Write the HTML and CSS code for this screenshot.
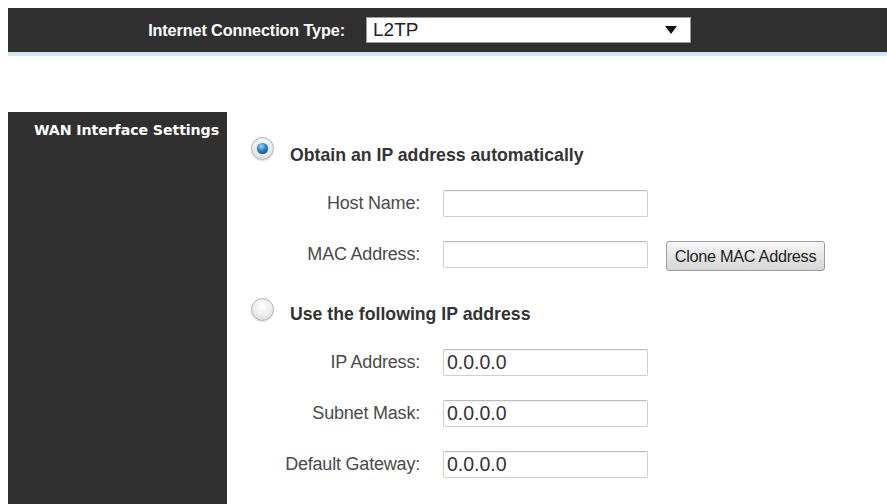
FILE: index.html
```html
<!DOCTYPE html>
<html>
<head>
<meta charset="utf-8">
<title>WAN Settings</title>
<link rel="stylesheet" href="styles.css">
</head>
<body>
<div class="topbar">
  <div class="type-label">Internet Connection Type:</div>
  <div class="select">
    <span class="select-value">L2TP</span>
    <svg class="select-arrow" width="12" height="8" viewBox="0 0 12 8"><path d="M0 0 L12 0 L6 8 Z" fill="#111"/></svg>
  </div>
</div>

<div class="main">
  <div class="sidebar">WAN Interface Settings</div>
  <div class="content">
    <div class="heading-row first">
      <span class="radio checked"><span class="dot"></span></span>
      <span class="heading">Obtain an IP address automatically</span>
    </div>
    <div class="field-row host">
      <label class="label">Host Name:</label>
      <div class="input"></div>
    </div>
    <div class="field-row">
      <label class="label">MAC Address:</label>
      <div class="input"></div>
      <div class="button">Clone MAC Address</div>
    </div>
    <div class="heading-row second">
      <span class="radio"></span>
      <span class="heading">Use the following IP address</span>
    </div>
    <div class="field-row ip">
      <label class="label">IP Address:</label>
      <div class="input">0.0.0.0</div>
    </div>
    <div class="field-row">
      <label class="label">Subnet Mask:</label>
      <div class="input">0.0.0.0</div>
    </div>
    <div class="field-row">
      <label class="label">Default Gateway:</label>
      <div class="input">0.0.0.0</div>
    </div>
  </div>
</div>
</body>
</html>
```

FILE: styles.css
```css
html, body {
  margin: 0;
  padding: 0;
  background: #ffffff;
  overflow: hidden;
}
body {
  font-family: "Liberation Sans", Arial, sans-serif;
  padding: 8px 0 0 8px;
}

.topbar {
  height: 44px;
  background: #303030;
  border-bottom: 4px solid #7fb2c8;
  border-image: linear-gradient(to bottom, #3f6f88, #6ea6bf, #cfe8f1) 1;
  display: flex;
  align-items: center;
}
.type-label {
  width: 337px;
  text-align: right;
  padding-right: 5px;
  color: #ffffff;
  font-weight: bold;
  font-size: 16.2px;
  letter-spacing: -0.1px;
}
.select {
  margin-left: 16px;
  background: #ffffff;
  border: 1px solid #9a9a9a;
  display: flex;
  align-items: center;
  justify-content: space-between;
  padding-left: 6px;
  padding-right: 13px;
  box-sizing: border-box;
  width: 325px;
  height: 26px;
}
.select-value {
  font-size: 19px;
  color: #222;
}
.select-arrow {
  display: block;
}

.main {
  margin-top: 56px;
  display: flex;
}
.sidebar {
  width: 219px;
  height: 392px;
  background: #303030;
  color: #ffffff;
  font-family: "DejaVu Sans", Verdana, sans-serif;
  font-weight: bold;
  font-size: 14.2px;
  line-height: 16px;
  text-align: right;
  padding: 10px 8px 0 0;
  box-sizing: border-box;
  letter-spacing: -0.1px;
}
.content {
  display: flex;
  flex-direction: column;
}

.heading-row {
  display: flex;
  align-items: flex-start;
  height: 29px;
  padding-left: 24px;
}
.heading-row.first {
  margin-top: 25px;
}
.heading-row.second {
  margin-top: 29px;
}
.heading {
  margin-left: 16px;
  font-weight: bold;
  font-size: 17.7px;
  color: #333333;
  line-height: 22px;
  margin-top: 7px;
}
.heading-row.second .heading {
  margin-top: 5px;
}

.radio {
  width: 23px;
  height: 23px;
  border-radius: 50%;
  box-sizing: border-box;
  border: 1px solid #b4b4b4;
  background: radial-gradient(circle at 50% 35%, #ffffff 0%, #ececec 55%, #cfcfcf 100%);
  display: flex;
  align-items: center;
  justify-content: center;
  box-shadow: 0 1px 1px rgba(0,0,0,0.12);
}
.radio .dot {
  width: 11px;
  height: 11px;
  border-radius: 50%;
  background: radial-gradient(circle at 40% 30%, #a8dcff 0%, #3d8fd6 35%, #135ea6 70%, #0a3b72 100%);
  box-shadow: 0 0 1px rgba(0,40,90,0.6);
}

.field-row {
  display: flex;
  align-items: center;
  height: 30px;
  margin-top: 21px;
}
.field-row.host {
  margin-top: 22px;
}
.field-row.ip {
  margin-top: 20px;
}
.label {
  width: 193px;
  text-align: right;
  font-size: 18px;
  color: #4a4a4a;
  letter-spacing: -0.2px;
}
.input {
  margin-left: 23px;
  width: 205px;
  height: 27px;
  box-sizing: border-box;
  border: 1px solid #cfcfcf;
  border-top-color: #bdbdbd;
  border-radius: 2px;
  background: #ffffff;
  box-shadow: inset 0 1px 1px rgba(0,0,0,0.06);
  font-size: 19.5px;
  color: #333333;
  line-height: 25px;
  padding-left: 3px;
}
.button {
  margin-left: 18px;
  margin-top: 4px;
  width: 159px;
  height: 30px;
  box-sizing: border-box;
  border: 1px solid #9c9c9c;
  border-radius: 3px;
  background: linear-gradient(to bottom, #f7f7f7, #e2e2e2 60%, #d6d6d6);
  font-size: 16.3px;
  color: #222222;
  display: flex;
  align-items: center;
  justify-content: center;
  letter-spacing: -0.3px;
}
```
